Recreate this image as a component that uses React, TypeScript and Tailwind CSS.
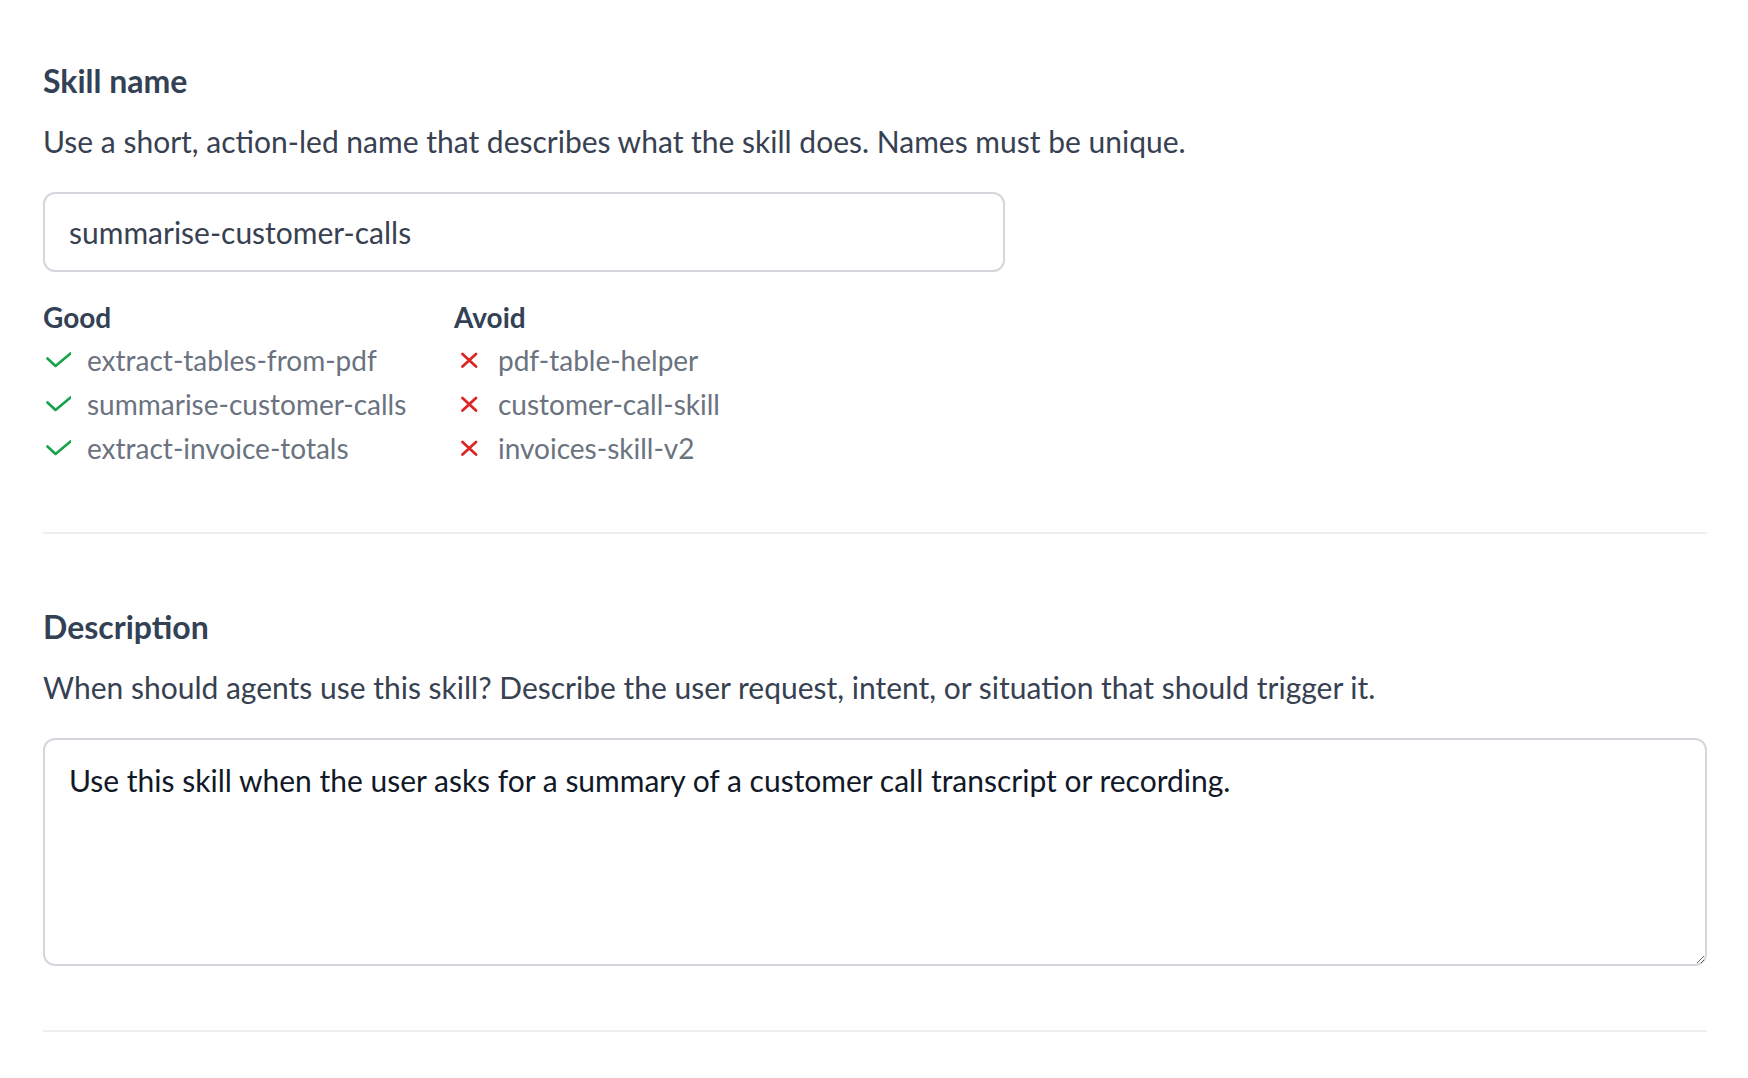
import React from "react";

const good = ["extract-tables-from-pdf", "summarise-customer-calls", "extract-invoice-totals"];
const avoid = ["pdf-table-helper", "customer-call-skill", "invoices-skill-v2"];

function CheckIcon() {
  return (
    <svg width="28" height="28" viewBox="0 0 28 28" className="shrink-0">
      <polyline points="4.5,12.5 12.5,20 27.5,7.5" fill="none" stroke="#16a34a" strokeWidth="2.6" strokeLinecap="round" strokeLinejoin="round" />
    </svg>
  );
}

function XIcon() {
  return (
    <svg width="28" height="28" viewBox="0 0 28 28" className="shrink-0">
      <path d="M8.5 8 L22 20.5 M22 8 L8.5 20.5" fill="none" stroke="#dc2626" strokeWidth="2.8" strokeLinecap="round" />
    </svg>
  );
}

export default function App() {
  return (
    <div className="min-h-screen bg-white font-['Lato','Noto_Sans',sans-serif] pl-[43px] pr-[41px] pt-[59px]">
      <section>
        <h2 className="text-[32px] font-bold leading-[44px] text-[#334155]">Skill name</h2>
        <p className="mt-[16px] text-[30px] leading-[44px] text-[#374151]">
          Use a short, action-led name that describes what the skill does. Names must be unique.
        </p>
        <input
          readOnly
          value="summarise-customer-calls"
          className="mt-[29px] block w-[962px] h-[80px] rounded-[12px] border-2 border-[#d4d6db] bg-white px-[24px] text-[30px] leading-[44px] text-[#374151] outline-none font-['Lato',sans-serif]"
        />
        <div className="mt-[25px] flex">
          <div className="w-[411px]">
            <div className="text-[28px] font-bold leading-[41px] text-[#334155]">Good</div>
            <ul>
              {good.map((g) => (
                <li key={g} className="flex items-center gap-[16px] text-[28px] leading-[44px] text-[#6b7280]">
                  <CheckIcon />
                  <span>{g}</span>
                </li>
              ))}
            </ul>
          </div>
          <div>
            <div className="text-[28px] font-bold leading-[41px] text-[#334155]">Avoid</div>
            <ul>
              {avoid.map((g) => (
                <li key={g} className="flex items-center gap-[16px] text-[28px] leading-[44px] text-[#6b7280]">
                  <XIcon />
                  <span>{g}</span>
                </li>
              ))}
            </ul>
          </div>
        </div>
      </section>
      <div className="mt-[62px] h-[2px] bg-[#eceef0]" />
      <section className="pt-[71px]">
        <h2 className="text-[32px] font-bold leading-[44px] text-[#334155]">Description</h2>
        <p className="mt-[16px] text-[30px] leading-[44px] text-[#374151]">
          When should agents use this skill? Describe the user request, intent, or situation that should trigger it.
        </p>
        <textarea
          readOnly
          value="Use this skill when the user asks for a summary of a customer call transcript or recording."
          className="mt-[29px] block w-full h-[228px] rounded-[12px] border-2 border-[#d4d6db] bg-white px-[24px] pt-[18px] pb-[18px] text-[30px] leading-[44px] text-[#111827] outline-none font-['Lato',sans-serif]"
        />
      </section>
      <div className="mt-[64px] h-[2px] bg-[#eceef0]" />
    </div>
  );
}
